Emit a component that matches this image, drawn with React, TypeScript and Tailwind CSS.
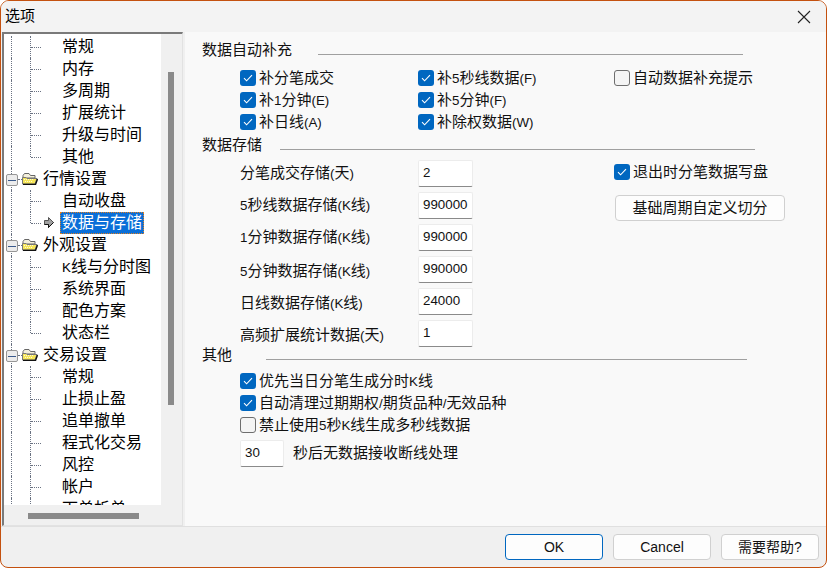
import React from 'react';

const CJK = '"Liberation Sans", "Noto Sans CJK SC", sans-serif';

// tree data: level 0 are folders, level 1 are leaves
const TREE = [
  { label: '常规', level: 1 },
  { label: '内存', level: 1 },
  { label: '多周期', level: 1 },
  { label: '扩展统计', level: 1 },
  { label: '升级与时间', level: 1 },
  { label: '其他', level: 1, last: true },
  { label: '行情设置', level: 0 },
  { label: '自动收盘', level: 1 },
  { label: '数据与存储', level: 1, last: true, selected: true },
  { label: '外观设置', level: 0 },
  { label: 'K线与分时图', level: 1 },
  { label: '系统界面', level: 1 },
  { label: '配色方案', level: 1 },
  { label: '状态栏', level: 1, last: true },
  { label: '交易设置', level: 0 },
  { label: '常规', level: 1 },
  { label: '止损止盈', level: 1 },
  { label: '追单撤单', level: 1 },
  { label: '程式化交易', level: 1 },
  { label: '风控', level: 1 },
  { label: '帐户', level: 1 },
  { label: '下单析单', level: 1 },
];

// latin runs sit at a smaller size than the CJK around them
function Label({ text, className }: { text: string; className?: string }) {
  return (
    <span className={`whitespace-nowrap ${className ?? 'text-[15px] text-[#111]'}`}>
      {text.split(/([A-Za-z0-9()\/]+)/).map((part, i) =>
        i % 2 === 1 ? (
          <span key={i} className="text-[13.33px]">
            {part}
          </span>
        ) : (
          part
        ),
      )}
    </span>
  );
}

function FolderIcon() {
  return (
    <svg width="16" height="12" viewBox="0 0 16 12" className="shrink-0">
      <path d="M1 2.5 L2.5 0.5 H7 L8.5 2.5 H13 V5 H1 Z" fill="#f4f0dc" stroke="#666" strokeWidth="1" />
      <path d="M0.5 11 V4.5 H4 L5 5.5 H15 L13 11 Z" fill="#f6e658" stroke="#777" strokeWidth="1" />
      <path d="M2 6.5 H12 M3 8.5 H11" stroke="#fffbd0" strokeWidth="1" strokeDasharray="1 1" />
      <path d="M1 11.5 H13.5 L15.5 6" fill="none" stroke="#111" strokeWidth="1.4" />
    </svg>
  );
}

function ArrowIcon() {
  return (
    <svg width="10" height="11" viewBox="0 0 10 11">
      <path d="M0.5 3.5 H4.5 V0.5 L9.5 5.5 L4.5 10.5 V7.5 H0.5 Z" fill="#a0a0a0" stroke="#555" strokeWidth="1" />
      <path d="M0.5 7.5 H4.5 V10.5 L9.5 5.5" fill="none" stroke="#111" strokeWidth="1" />
    </svg>
  );
}

function TreeRow({ item }: { item: (typeof TREE)[number] }) {
  if (item.level === 0) {
    return (
      <div className="relative flex h-[22px] items-center pl-[18px]">
        <div className="absolute left-[7px] top-0 h-[22px] border-l border-dotted border-gray-500" />
        <div className="absolute left-[2px] top-[6px] flex h-[12px] w-[12px] items-center justify-center rounded-[2px] border border-[#969696] bg-[#ececec]">
          <div className="h-px w-[8px] bg-[#3a5a8c]" />
        </div>
        <div className="absolute left-[14px] top-[11px] w-[4px] border-t border-dotted border-gray-500" />
        <FolderIcon />
        <span className="ml-[5px] text-[16px] text-black">{item.label}</span>
      </div>
    );
  }
  return (
    <div className="relative flex h-[22px] items-center pl-[58px]">
      <div className="absolute left-[7px] top-0 h-[22px] border-l border-dotted border-gray-500" />
      <div
        className={`absolute left-[26px] top-0 border-l border-dotted border-gray-500 ${item.last ? 'h-[11px]' : 'h-[22px]'}`}
      />
      <div className="absolute left-[27px] top-[11px] w-[10px] border-t border-dotted border-gray-500" />
      {item.selected && (
        <div className="absolute left-[40px] top-[5px]">
          <ArrowIcon />
        </div>
      )}
      {item.selected ? (
        <span className="-ml-[2px] flex h-[22px] items-center border border-dotted border-[#e08020] bg-[#0a6fd8] pl-px pr-px text-[16px] text-white">
          {item.label}
        </span>
      ) : (
        <Label text={item.label} className="text-[16px] text-black" />
      )}
    </div>
  );
}

function CheckBox({ checked, label }: { checked: boolean; label: string }) {
  return (
    <div className="flex h-[22px] items-center gap-[3px]">
      {checked ? (
        <div className="flex h-[16px] w-[16px] items-center justify-center rounded-[3px] bg-[#0067c0]">
          <svg width="10" height="8" viewBox="0 0 10 8">
            <path d="M1 4.2 L3.6 6.8 L9 1.2" fill="none" stroke="#fff" strokeWidth="1.1" />
          </svg>
        </div>
      ) : (
        <div className="h-[16px] w-[16px] rounded-[3px] border border-[#6e6e6e] bg-[#f4f4f4]" />
      )}
      <Label text={label} />
    </div>
  );
}

function SectionTitle({ title, lineWidth }: { title: string; lineWidth: string }) {
  return (
    <div className="flex h-[22px] items-center">
      <Label text={title} />
      <div className={`ml-auto mt-[8px] h-px bg-[#a0a0a0] ${lineWidth}`} />
    </div>
  );
}

function NumField({ value, width = 'w-[55px]' }: { value: string; width?: string }) {
  return (
    <div
      className={`flex h-[27px] ${width} items-start rounded-[2px] border border-[#ececec] border-b-[#8a8a8a] bg-white pl-[4px] pt-[2px] text-[13.33px] text-[#111]`}
    >
      {value}
    </div>
  );
}

function FootButton({ label, primary }: { label: string; primary?: boolean }) {
  return (
    <button
      className={`h-[26px] w-[98px] rounded-[4px] bg-[#fdfdfd] text-[14px] text-[#111] ${
        primary ? 'border-[1.5px] border-[#0067c0]' : 'border border-[#d0d0d0]'
      }`}
    >
      {label}
    </button>
  );
}

const STORAGE_ROWS = [
  { label: '分笔成交存储(天)', value: '2' },
  { label: '5秒线数据存储(K线)', value: '990000' },
  { label: '1分钟数据存储(K线)', value: '990000' },
  { label: '5分钟数据存储(K线)', value: '990000', low: true },
  { label: '日线数据存储(K线)', value: '24000', low: true },
  { label: '高频扩展统计数据(天)', value: '1', low: true },
];

export default function App() {
  return (
    <div
      className="flex h-[568px] w-[827px] flex-col overflow-hidden rounded-t-[9px] rounded-b-[8px] border border-[#c4510f] bg-[#f0f0f0]"
      style={{ fontFamily: CJK }}
    >
      {/* Title bar */}
      <div className="flex h-[31px] shrink-0 items-center justify-between bg-[#f3f3f3] pl-[4px] pr-[15px]">
        <span className="text-[15px] text-black">选项</span>
        <svg width="14" height="14" viewBox="0 0 14 14">
          <path d="M1 1 L13 13 M13 1 L1 13" stroke="#222" strokeWidth="1.1" fill="none" />
        </svg>
      </div>

      <div className="flex min-h-0 flex-1">
        {/* Left tree */}
        <div className="ml-[1px] flex h-[494px] w-[181px] shrink-0 flex-col border border-[#e2e2e2] border-l-2 border-t-2 border-l-[#7a7a7a] border-t-[#7a7a7a] bg-[#f0f0f0]">
          <div className="flex min-h-0 flex-1">
            <div className="w-[157px] overflow-hidden bg-white pt-[2px]">
              {TREE.map((item, i) => (
                <TreeRow key={i} item={item} />
              ))}
            </div>
            <div className="relative flex-1">
              <div className="absolute left-[7px] top-[38px] h-[333px] w-[6px] bg-[#8a8a8a]" />
            </div>
          </div>
          <div className="relative h-[20px] shrink-0">
            <div className="absolute left-[24px] top-[8px] h-[6px] w-[111px] bg-[#8a8a8a]" />
          </div>
        </div>

        {/* Right pane */}
        <div className="ml-[2px] flex h-[494px] flex-1 flex-col bg-[#f9f9f9] pl-[17px] pt-[7px]">
          <div className="w-[541px]">
            <SectionTitle title="数据自动补充" lineWidth="w-[425px]" />
          </div>
          <div className="mt-[6px] grid grid-cols-[178px_196px_1fr] pl-[38px]">
            <CheckBox checked label="补分笔成交" />
            <CheckBox checked label="补5秒线数据(F)" />
            <CheckBox checked={false} label="自动数据补充提示" />
            <CheckBox checked label="补1分钟(E)" />
            <CheckBox checked label="补5分钟(F)" />
            <div />
            <CheckBox checked label="补日线(A)" />
            <CheckBox checked label="补除权数据(W)" />
          </div>
          <div className="mt-px w-[553px]">
            <SectionTitle title="数据存储" lineWidth="w-[475px]" />
          </div>
          <div className="flex pl-[38px] pt-[4px]">
            <div className="flex w-[374px] flex-col gap-[5px]">
              {STORAGE_ROWS.map((row) => (
                <div key={row.label} className="flex h-[27px] items-center justify-between pr-[141px]">
                  <Label text={row.label} className={`text-[15px] text-[#111] ${row.low ? 'pt-[3px]' : ''}`} />
                  <NumField value={row.value} />
                </div>
              ))}
            </div>
            <div className="flex flex-col pt-px">
              <CheckBox checked label="退出时分笔数据写盘" />
              <button className="ml-[1px] mt-[12px] h-[26px] w-[170px] rounded-[4px] border border-[#d0d0d0] bg-[#fdfdfd] text-[15px] text-[#111]">
                基础周期自定义切分
              </button>
            </div>
          </div>
          <div className="-mt-[3px] w-[545px]">
            <SectionTitle title="其他" lineWidth="w-[481px]" />
          </div>
          <div className="flex flex-col pl-[38px] pt-[4px]">
            <CheckBox checked label="优先当日分笔生成分时K线" />
            <CheckBox checked label="自动清理过期期权/期货品种/无效品种" />
            <CheckBox checked={false} label="禁止使用5秒K线生成多秒线数据" />
            <div className="mt-[4px] flex items-center gap-[9px]">
              <NumField value="30" width="w-[44px]" />
              <Label text="秒后无数据接收断线处理" />
            </div>
          </div>
        </div>
      </div>

      {/* Footer buttons */}
      <div className="flex h-[41px] shrink-0 items-start justify-end gap-[10px] border-t border-[#e0e0e0] pr-[7px] pt-[7px]">
        <FootButton label="OK" primary />
        <FootButton label="Cancel" />
        <FootButton label="需要帮助?" />
      </div>
    </div>
  );
}
